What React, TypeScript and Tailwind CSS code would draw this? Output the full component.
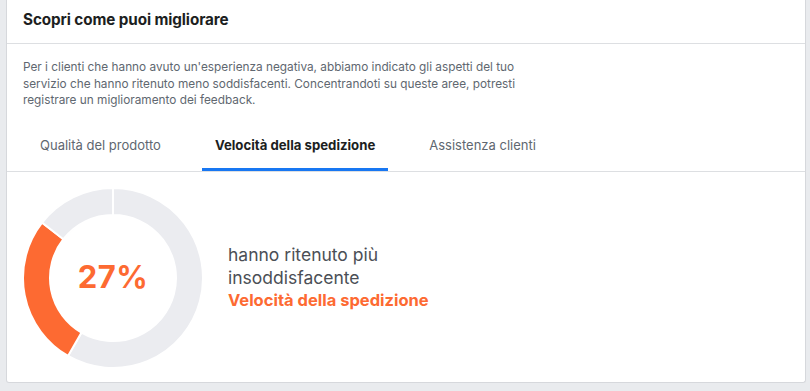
import React from 'react'

const ORANGE = '#fd6a32'
const RING = '#ebecf0'

// annular sector path, angles in degrees clockwise from 12 o'clock
const sector = (cx: number, cy: number, ro: number, ri: number, a0: number, a1: number) => {
  const p = (r: number, a: number) => {
    const t = (a * Math.PI) / 180
    return `${(cx + r * Math.sin(t)).toFixed(2)} ${(cy - r * Math.cos(t)).toFixed(2)}`
  }
  const large = a1 - a0 > 180 ? 1 : 0
  return `M ${p(ro, a0)} A ${ro} ${ro} 0 ${large} 1 ${p(ro, a1)} L ${p(ri, a1)} A ${ri} ${ri} 0 ${large} 0 ${p(ri, a0)} Z`
}

const Donut = () => {
  const segs = [
    { from: 0, to: 210, color: RING },
    { from: 210, to: 308, color: ORANGE },
    { from: 308, to: 360, color: RING },
  ]
  return (
    <div className="relative w-[180px] h-[180px] shrink-0">
      <svg width="180" height="180" viewBox="0 0 180 180">
        {segs.map((s, i) => (
          <path key={i} d={sector(90, 90, 90, 63, s.from, s.to)} fill={s.color} stroke="#fff" strokeWidth="2" />
        ))}
      </svg>
      <div className="absolute inset-0 flex items-center justify-center text-[31px] font-bold text-[#fd6a32] tracking-[0.5px]">
        27%
      </div>
    </div>
  )
}

export default function App() {
  return (
    <div className="w-[810px] h-[391px] bg-[#e9ebee] overflow-hidden" style={{ fontFamily: 'Inter, "Noto Sans", sans-serif' }}>
      <div className="ml-[6px] w-[800px] h-[383px] bg-white border-x border-b border-[#d6d8dc] rounded-b-[3px] flex flex-col">
        {/* header */}
        <div className="h-[44px] flex items-center pl-[16px] border-b border-[#dddfe2]">
          <h3 className="text-[15.25px] font-bold text-[#1c1e21] tracking-[-0.1px] -mt-[3px]">Scopri come puoi migliorare</h3>
        </div>

        {/* intro text */}
        <p className="pl-[16px] pr-[40px] pt-[15px] text-[11.8px] leading-[16.5px] text-[#606770]">
          Per i clienti che hanno avuto un'esperienza negativa, abbiamo indicato gli aspetti del tuo
          <br />
          servizio che hanno ritenuto meno soddisfacenti. Concentrandoti su queste aree, potresti
          <br />
          registrare un miglioramento dei feedback.
        </p>

        {/* tabs */}
        <div className="mt-[12px] flex pl-[20px] gap-[28px] border-b border-[#dddfe2]">
          <div className="h-[50px] px-[13px] flex items-center text-[13px] text-[#606770]">Qualità del prodotto</div>
          <div className="h-[50px] px-[13px] flex items-center text-[13.2px] font-bold text-[#1c1e21] border-b-[3px] border-[#1877f2] pt-[3px]">
            Velocità della spedizione
          </div>
          <div className="h-[50px] px-[13px] flex items-center text-[13px] text-[#606770]">Assistenza clienti</div>
        </div>

        {/* chart */}
        <div className="flex items-center pl-[16px] pt-[16px]">
          <Donut />
          <div className="ml-[25px] leading-[23px] text-[#4b4f56]">
            <div className="text-[17.5px]">hanno ritenuto più</div>
            <div className="text-[17.5px]">insoddisfacente</div>
            <div className="text-[16.5px] font-bold text-[#fd6a32]">Velocità della spedizione</div>
          </div>
        </div>
      </div>
    </div>
  )
}
